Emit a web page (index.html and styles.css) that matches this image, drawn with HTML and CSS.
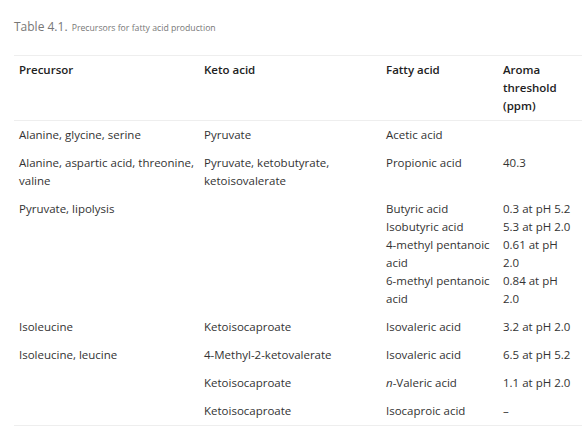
FILE: index.html
```html
<!DOCTYPE html>
<html>
<head>
<meta charset="utf-8">
<link rel="stylesheet" href="styles.css">
</head>
<body>
<div class="wrap">
  <div class="caption"><span class="label">Table 4.1.</span> <span class="title">Precursors for fatty acid production</span></div>
  <table class="tbl">
    <colgroup>
      <col class="c1"><col class="c2"><col class="c3"><col class="c4">
    </colgroup>
    <thead>
      <tr><th>Precursor</th><th>Keto acid</th><th>Fatty acid</th><th>Aroma threshold (ppm)</th></tr>
    </thead>
    <tbody>
      <tr><td>Alanine, glycine, serine</td><td>Pyruvate</td><td>Acetic acid</td><td></td></tr>
      <tr><td>Alanine, aspartic acid, threonine, valine</td><td>Pyruvate, ketobutyrate, ketoisovalerate</td><td>Propionic acid</td><td>40.3</td></tr>
      <tr><td>Pyruvate, lipolysis</td><td></td><td>Butyric acid<br>Isobutyric acid<br>4-methyl pentanoic acid<br>6-methyl pentanoic acid</td><td>0.3 at pH 5.2<br>5.3 at pH 2.0<br>0.61 at pH<br>2.0<br>0.84 at pH<br>2.0</td></tr>
      <tr><td>Isoleucine</td><td>Ketoisocaproate</td><td>Isovaleric acid</td><td>3.2 at pH 2.0</td></tr>
      <tr><td>Isoleucine, leucine</td><td>4-Methyl-2-ketovalerate</td><td>Isovaleric acid</td><td>6.5 at pH 5.2</td></tr>
      <tr><td></td><td>Ketoisocaproate</td><td><i>n</i>-Valeric acid</td><td>1.1 at pH 2.0</td></tr>
      <tr><td></td><td>Ketoisocaproate</td><td>Isocaproic acid</td><td>–</td></tr>
    </tbody>
  </table>
</div>
</body>
</html>
```
FILE: styles.css
```css
html, body {
  margin: 0;
  padding: 0;
  background: #ffffff;
}
.wrap {
  padding: 17px 6px 0 14px;
  font-family: "Open Sans", Lato, sans-serif;
  color: #333333;
}
.caption {
  color: #777777;
  line-height: 16px;
  height: 16px;
  margin-bottom: 22px;
}
.caption .label {
  font-size: 12px;
}
.caption .title {
  font-size: 8.7px;
}
.tbl {
  width: 568px;
  border-collapse: collapse;
  table-layout: fixed;
  font-size: 11.5px;
  line-height: 18px;
  border-top: 1px solid #eeeeee;
  border-bottom: 1px solid #eeeeee;
}
.c1 { width: 185px; }
.c2 { width: 182px; }
.c3 { width: 117px; }
.c4 { width: 84px; }
.tbl th {
  text-align: left;
  vertical-align: top;
  font-weight: 600;
  color: #222222;
  padding: 5px 5px;
  border-bottom: 1px solid #eeeeee;
}
.tbl td {
  vertical-align: top;
  padding: 5px 5px;
}
```
